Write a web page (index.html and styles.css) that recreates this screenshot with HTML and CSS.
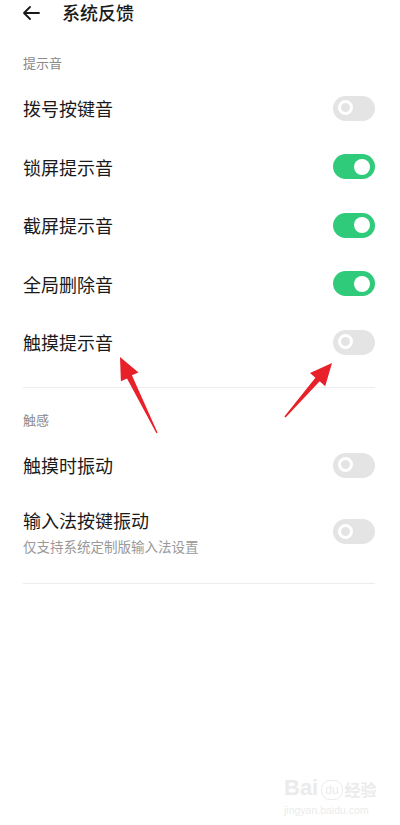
FILE: index.html
```html
<!DOCTYPE html>
<html lang="zh-CN">
<head>
    <meta charset="UTF-8">
    <meta name="viewport" content="width=device-width, initial-scale=1.0">
    <title>系统反馈</title>
    <link rel="stylesheet" href="styles.css">
</head>
<body>

    <div class="page">
        <div class="header">
            <svg class="back" width="18" height="14" viewBox="0 0 18 14">
                <path d="M17 7H2M8 1L2 7l6 6" fill="none" stroke="#1a1a1a" stroke-width="1.8" stroke-linecap="round" stroke-linejoin="round"/>
            </svg>
            <span class="title">系统反馈</span>
        </div>

        <!-- Sound section -->
        <div class="group">
            <div class="group-label">提示音</div>
            <div class="row"><span class="row-text">拨号按键音</span><span class="switch"></span></div>
            <div class="row"><span class="row-text">锁屏提示音</span><span class="switch on"></span></div>
            <div class="row"><span class="row-text">截屏提示音</span><span class="switch on"></span></div>
            <div class="row"><span class="row-text">全局删除音</span><span class="switch on"></span></div>
            <div class="row"><span class="row-text">触摸提示音</span><span class="switch"></span></div>
        </div>

        <!-- Haptics section -->
        <div class="group second">
            <div class="group-label">触感</div>
            <div class="row"><span class="row-text">触摸时振动</span><span class="switch"></span></div>
            <div class="row tall">
                <div>
                    <div class="row-text">输入法按键振动</div>
                    <div class="row-sub">仅支持系统定制版输入法设置</div>
                </div>
                <span class="switch"></span>
            </div>
        </div>

        <!-- red annotation arrows -->
        <svg class="marks" width="400" height="825" viewBox="0 0 400 825">
            <polygon fill="#e8202a" points="120,357 138.5,372.5 131.9,375.3 157.6,432.8 156.4,433.2 127.0,378.4 120.9,381.2"/>
            <polygon fill="#e8202a" points="332,363 325.2,386.2 319.7,381.3 285.6,417.5 284.4,416.5 315.4,377.8 310.0,373.0"/>
        </svg>

        <div class="watermark">
            <div class="wm-top"><span class="wm-bai">Bai</span><span class="wm-du">du</span><span class="wm-cn">经验</span></div>
            <div class="wm-url">jingyan.baidu.com</div>
        </div>
    </div>

</body>
</html>
```

FILE: styles.css
```css
body {
    margin: 0;
    padding: 0;
    background-color: #fff;
    color: #1a1a1a;
    font-family: "Noto Sans CJK SC", "Noto Sans", sans-serif;
}

.page {
    position: relative;
    width: 400px;
    height: 825px;
    overflow: hidden;
}

.header {
    height: 25px;
    display: flex;
    align-items: center;
    padding-left: 22px;
    gap: 22px;
}

.back {
    display: block;
}

.title {
    font-size: 18px;
    line-height: 25px;
    font-weight: 500;
}

.group {
    margin: 0 25px 0 23px;
    padding-bottom: 15.5px;
    border-bottom: 1px solid #ececec;
}

.group.second {
    padding-bottom: 13px;
}

.group-label {
    margin-top: 28px;
    margin-bottom: 6px;
    height: 20px;
    line-height: 20px;
    font-size: 13px;
    color: #8a8a8a;
}

.second .group-label {
    margin-top: 22px;
}

.row {
    height: 58.5px;
    display: flex;
    align-items: center;
    justify-content: space-between;
}

.row.tall {
    height: auto;
    padding: 13px 0 14px;
}

.row-text {
    font-size: 18px;
    line-height: 24px;
}

.row-sub {
    margin-top: 4px;
    font-size: 13.5px;
    line-height: 20px;
    color: #999;
}

.switch {
    position: relative;
    flex: none;
    width: 42px;
    height: 25px;
    border-radius: 13px;
    background-color: #e4e4e4;
}

.switch::after {
    content: "";
    position: absolute;
    left: 5px;
    top: 4.5px;
    width: 9px;
    height: 9px;
    border: 3.5px solid #fff;
    border-radius: 50%;
    background-color: #e4e4e4;
}

.switch.on {
    background-color: #2fcb7b;
}

.switch.on::after {
    left: 21px;
    top: 4.5px;
    width: 16px;
    height: 16px;
    border: none;
    background-color: #fff;
}

.marks {
    position: absolute;
    left: 0;
    top: 0;
    pointer-events: none;
}

.watermark {
    position: absolute;
    left: 284px;
    top: 772px;
    color: #ebebeb;
    font-family: "Liberation Sans", sans-serif;
}

.wm-top {
    display: flex;
    align-items: flex-end;
    height: 28px;
}

.wm-bai {
    font-size: 22px;
    font-weight: bold;
    line-height: 24px;
}

.wm-du {
    margin: 0 2px 0 3px;
    padding: 0 3px;
    font-size: 12px;
    line-height: 18px;
    border: 1.5px solid #ebebeb;
    border-radius: 9px;
}

.wm-cn {
    font-family: "Noto Sans CJK SC", sans-serif;
    font-size: 16px;
    font-weight: bold;
    line-height: 22px;
}

.wm-url {
    margin-top: 4px;
    font-size: 10.5px;
    line-height: 12px;
}
```
